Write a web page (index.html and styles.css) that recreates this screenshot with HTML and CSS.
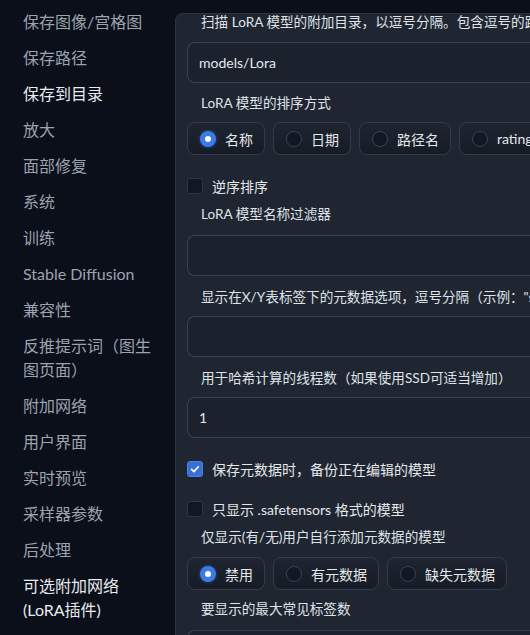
FILE: index.html
```html
<!DOCTYPE html>
<html lang="zh-CN">
<head>
    <meta charset="UTF-8">
    <meta name="viewport" content="width=device-width, initial-scale=1.0">
    <title>设置</title>
    <link rel="stylesheet" href="styles.css">
</head>
<body>
    <div class="layout">
        <nav class="sidebar">
            <div class="nav-item">保存图像/宫格图</div>
            <div class="nav-item">保存路径</div>
            <div class="nav-item active">保存到目录</div>
            <div class="nav-item">放大</div>
            <div class="nav-item">面部修复</div>
            <div class="nav-item">系统</div>
            <div class="nav-item">训练</div>
            <div class="nav-item">Stable Diffusion</div>
            <div class="nav-item">兼容性</div>
            <div class="nav-item">反推提示词（图生图页面）</div>
            <div class="nav-item">附加网络</div>
            <div class="nav-item">用户界面</div>
            <div class="nav-item">实时预览</div>
            <div class="nav-item">采样器参数</div>
            <div class="nav-item">后处理</div>
            <div class="nav-item active">可选附加网络(LoRA插件)</div>
        </nav>
        <main class="main">
            <div class="panel">
                <div class="label first">扫描 LoRA 模型的附加目录，以逗号分隔。包含逗号的路径请用引号括起来</div>
                <div class="input gap-11">models/Lora</div>

                <div class="label gap-11">LoRA 模型的排序方式</div>
                <div class="radios">
                    <div class="radio checked"><span class="dot"></span>名称</div>
                    <div class="radio"><span class="dot"></span>日期</div>
                    <div class="radio"><span class="dot"></span>路径名</div>
                    <div class="radio"><span class="dot"></span>rating</div>
                </div>

                <div class="check"><span class="box"></span>逆序排序</div>

                <div class="label">LoRA 模型名称过滤器</div>
                <div class="input gap-12"></div>

                <div class="label">显示在X/Y表标签下的元数据选项，逗号分隔（示例："ss_learning_rate, ss_num_epochs"）</div>
                <div class="input"></div>

                <div class="label">用于哈希计算的线程数（如果使用SSD可适当增加）</div>
                <div class="input">1</div>

                <div class="check"><span class="box on">
                    <svg viewBox="0 0 16 16" width="12" height="12"><path d="M3.5 8.5l3 3 6-6.5" fill="none" stroke="#fff" stroke-width="2.2" stroke-linecap="round" stroke-linejoin="round"/></svg>
                </span>保存元数据时，备份正在编辑的模型</div>

                <div class="check wide"><span class="box"></span>只显示 .safetensors 格式的模型</div>

                <div class="label">仅显示(有/无)用户自行添加元数据的模型</div>
                <div class="radios gap-11">
                    <div class="radio checked"><span class="dot"></span>禁用</div>
                    <div class="radio"><span class="dot"></span>有元数据</div>
                    <div class="radio"><span class="dot"></span>缺失元数据</div>
                </div>

                <div class="label gap-10">要显示的最大常见标签数</div>
                <div class="input gap-12">20</div>
            </div>
        </main>
    </div>
</body>
</html>
```

FILE: styles.css
```css
body {
    margin: 0;
    height: 635px;
    overflow: hidden;
    background: #0b0f19;
    font-family: Lato, "Noto Sans CJK SC", sans-serif;
    color: #e5e7eb;
}
.layout {
    display: grid;
    grid-template-columns: 175px 1fr;
    height: 635px;
}
.sidebar {
    padding: 4px 22px 0 23px;
    font-size: 16px;
}
.nav-item {
    padding: 6px 0;
    line-height: 24px;
    color: #9ca3af;
}
.nav-item.active {
    color: #e8eaee;
}
.main {
    padding-top: 13px;
    overflow: hidden;
}
.panel {
    width: 520px;
    height: 640px;
    background: #1f2631;
    border: 1px solid #2b3340;
    border-right: none;
    border-radius: 8px 0 0 0;
    padding: 0 0 0 11px;
}
.label {
    font-size: 13.6px;
    line-height: 18px;
    height: 18px;
    padding-left: 14px;
    margin-top: 12px;
    white-space: nowrap;
    color: #dfe3e8;
}
.label.first {
    margin-top: -1px;
}
.input {
    margin-top: 10px;
    height: 39px;
    border: 1px solid #374151;
    border-right: none;
    border-radius: 8px 0 0 8px;
    background: #1c222d;
    font-size: 14px;
    line-height: 39px;
    padding-left: 11px;
    color: #e5e7eb;
}
.radios {
    display: flex;
    gap: 8px;
    margin-top: 10px;
    white-space: nowrap;
}
.gap-10 {
    margin-top: 10px;
}
.gap-11 {
    margin-top: 11px;
}
.gap-12 {
    margin-top: 12px;
}
.radio {
    display: flex;
    align-items: center;
    height: 31px;
    padding: 0 11px 0 12px;
    border: 1px solid #343c4a;
    border-radius: 8px;
    background: linear-gradient(to bottom, #1e2530, #161c26);
    font-size: 14px;
}
.dot {
    width: 14px;
    height: 14px;
    border-radius: 50%;
    border: 1px solid #3a4352;
    background: #111724;
    margin-right: 9px;
    flex-shrink: 0;
}
.radio.checked .dot {
    width: 6px;
    height: 6px;
    border: 5px solid #3b7be8;
    background: #fff;
    box-shadow: 0 0 3px rgba(59, 123, 232, 0.6);
}
.check {
    display: flex;
    align-items: center;
    height: 15px;
    margin-top: 23px;
    font-size: 14px;
    color: #e5e7eb;
    white-space: nowrap;
}
.check.wide {
    margin-top: 25px;
}
.box {
    width: 14px;
    height: 14px;
    border: 1px solid #2f3744;
    border-radius: 3px;
    background: #111724;
    margin-right: 9px;
    display: flex;
    align-items: center;
    justify-content: center;
    flex-shrink: 0;
}
.box.on {
    background: #3b6fd8;
    border-color: #4a80e8;
}
```
